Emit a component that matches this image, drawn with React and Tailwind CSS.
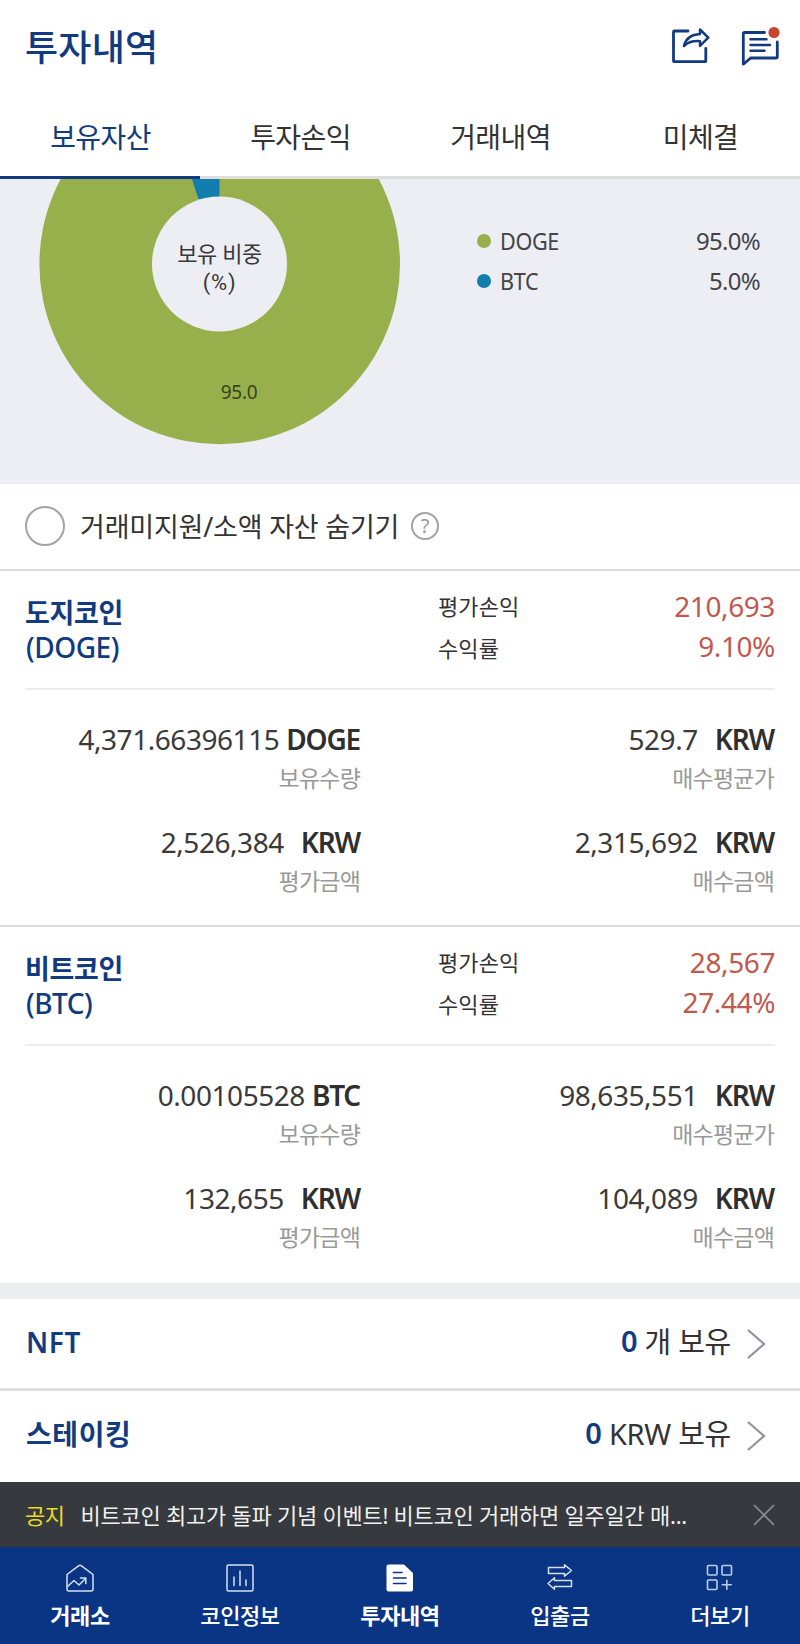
import { useState } from 'react';

const TABS = ['보유자산', '투자손익', '거래내역', '미체결'];

const LEGEND = [
  { symbol: 'DOGE', ratio: '95.0%', dot: 'bg-[#98b04c]' },
  { symbol: 'BTC', ratio: '5.0%', dot: 'bg-[#127eae]' },
];

const COINS = [
  {
    name: '도지코인',
    symbol: 'DOGE',
    profit: '210,693',
    rate: '9.10%',
    amount: '4,371.66396115',
    avgPrice: '529.7',
    evalPrice: '2,526,384',
    buyPrice: '2,315,692',
  },
  {
    name: '비트코인',
    symbol: 'BTC',
    profit: '28,567',
    rate: '27.44%',
    amount: '0.00105528',
    avgPrice: '98,635,551',
    evalPrice: '132,655',
    buyPrice: '104,089',
  },
];

/* ---------------- ICONS ---------------- */
const ShareIcon = () => (
  <svg width="40" height="40" viewBox="0 0 40 40" fill="none" stroke="#123a7e" strokeWidth="2.8" strokeLinecap="round" strokeLinejoin="round">
    <path d="M18 3H4.500Q3.500 3 3.500 4V32.500Q3.500 33.700 4.700 33.700H34.500Q35.800 33.700 35.800 32.500V20.500" />
    <path d="M14 18C15.500 11 21 6.500 30 6V1.500L38.300 9.700L30 17.800V13.200C23.500 12.700 18.500 13.500 14 18Z" strokeWidth="2.500" />
  </svg>
);

const MessageIcon = () => (
  <svg className="overflow-visible" width="40" height="40" viewBox="0 0 40 40" fill="none" stroke="#123a7e" strokeWidth="2.8" strokeLinecap="round" strokeLinejoin="round">
    <path d="M24.500 4.500H4.500Q3.300 4.500 3.300 5.700V36.200L10.700 30H36Q37.300 30 37.300 28.700V14" />
    <path d="M10.500 11.200H26.500M10.500 16.900H30M10.500 22.700H24.500" strokeWidth="2.500" />
    <circle cx="34" cy="4.500" r="5.600" fill="#c8452e" stroke="none" />
  </svg>
);

const HomeIcon = () => (
  <svg width="28" height="28" viewBox="0 0 28 28" fill="none" stroke="#d5dff0" strokeWidth="1.5" strokeLinecap="round" strokeLinejoin="round">
    <path d="M1 10.500L12.500 1.800Q14 0.900 15.500 1.800L27 10.500V25Q27 27 25 27H3Q1 27 1 25Z" />
    <path d="M1.500 22.500L8 16.500L13 21L19.500 14.500M14.500 14H19.800V19.500" />
  </svg>
);

const ChartIcon = () => (
  <svg width="28" height="28" viewBox="0 0 28 28" fill="none" stroke="#d5dff0" strokeWidth="1.5" strokeLinecap="round">
    <rect x="1" y="1" width="26" height="26" rx="1.5" />
    <path d="M8 13V21.500M14 7V21.500M20 16V21.500" />
  </svg>
);

const DocIcon = () => (
  <svg width="28" height="28" viewBox="0 0 28 28">
    <path d="M2.500 0.500H18L27 9V25.500Q27 27.500 25 27.500H2.500Q0.500 27.500 0.500 25.500V2.500Q0.500 0.500 2.500 0.500Z" fill="#fff" />
    <path d="M7.500 8.500H16M7.500 14H20M7.500 19.500H20" stroke="#0a3585" strokeWidth="1.6" strokeLinecap="round" />
  </svg>
);

const TransferIcon = () => (
  <svg width="28" height="28" viewBox="0 0 28 28" fill="none" stroke="#d5dff0" strokeWidth="1.5" strokeLinejoin="round">
    <path d="M2.500 3.500H18.500V0.800L25.500 6.500L18.500 12.200V9.500H2.500Z" />
    <path d="M25.500 16.500H8.500V13.800L2 19.500L8.500 25.200V22.500H25.500Z" />
  </svg>
);

const MoreIcon = () => (
  <svg width="28" height="28" viewBox="0 0 28 28" fill="none" stroke="#bccdec" strokeWidth="1.6" strokeLinecap="round">
    <rect x="1.5" y="1.5" width="9.5" height="9.5" rx="1" />
    <rect x="16" y="1.5" width="9.5" height="9.5" rx="1" />
    <rect x="1.5" y="16" width="9.5" height="9.5" rx="1" />
    <path d="M20.800 16.300V25.300M16.300 20.800H25.300" />
  </svg>
);

const Chevron = () => (
  <svg width="20" height="32" viewBox="0 0 20 32" fill="none" stroke="#8f939c" strokeWidth="2.2">
    <path d="M2 2L18 16L2 30" />
  </svg>
);

const NAV = [
  { label: '거래소', Icon: HomeIcon, weight: 'font-bold' },
  { label: '코인정보', Icon: ChartIcon, weight: 'font-medium' },
  { label: '투자내역', Icon: DocIcon, weight: 'font-bold' },
  { label: '입출금', Icon: TransferIcon, weight: 'font-medium' },
  { label: '더보기', Icon: MoreIcon, weight: 'font-medium' },
];

function Cell({ value, unit, label, tight }) {
  return (
    <div className="text-right">
      <div className={`flex h-10 items-center justify-end text-[28px] leading-10 ${tight ? 'gap-[7px]' : 'gap-[17px]'}`}>
        <span className="tracking-[-0.45px] text-[#3a3a3a]">{value}</span>
        <span className="font-semibold tracking-[-1.2px] text-[#2f2f2f]">{unit}</span>
      </div>
      <div className="h-[38px] text-[23px] leading-[38px] tracking-[-0.8px] text-[#999]">{label}</div>
    </div>
  );
}

function CoinItem({ coin }) {
  return (
    <section className="h-[356px] border-b-2 border-[#dcdcdc] px-[25px] last:border-white">
      <div className="flex h-[119px] border-b-2 border-[#ececec] pt-[25px]">
        <h2 className="w-[413px] text-[27px] leading-[34px] tracking-[-0.3px] text-[#123a7e]">
          <span className="block font-bold">{coin.name}</span>
          <span className="block pl-px text-[28px] font-medium tracking-[-0.5px]">({coin.symbol})</span>
        </h2>
        <div className="-mt-[11px] text-[22px] leading-[42px] tracking-[0.1px] text-[#333]">
          <p>평가손익</p>
          <p>수익률</p>
        </div>
        <div className="-mt-[10px] ml-auto text-right text-[28px] leading-10 tracking-[-0.4px] text-[#c1594e]">
          <p>{coin.profit}</p>
          <p>{coin.rate}</p>
        </div>
      </div>
      <div className="grid grid-cols-[335px_414px] gap-y-[25px] pt-[29px]">
        <Cell value={coin.amount} unit={coin.symbol} label="보유수량" tight />
        <Cell value={coin.avgPrice} unit="KRW" label="매수평균가" />
        <Cell value={coin.evalPrice} unit="KRW" label="평가금액" />
        <Cell value={coin.buyPrice} unit="KRW" label="매수금액" />
      </div>
    </section>
  );
}

function HoldingRow({ title, count, unit }) {
  return (
    <div className="flex items-center pr-[34px] pl-[26px] last:pb-[2px]">
      <span className="-mt-[3px] text-[28px] font-semibold tracking-[0.6px] text-[#123a7e]">{title}</span>
      <span className="-mt-[5px] ml-auto text-[29px] font-semibold text-[#123a7e]">{count}</span>
      <span className="-mt-[3px] mr-[15px] ml-[7px] text-[29px] tracking-[-0.3px] text-[#333]">{unit} 보유</span>
      <Chevron />
    </div>
  );
}

export default function App() {
  const [tab, setTab] = useState('보유자산');
  const [hideSmall, setHideSmall] = useState(false);
  const [notice, setNotice] = useState(true);

  return (
    <div className="flex h-[1644px] w-[800px] flex-col overflow-hidden bg-white font-['Noto_Sans','Noto_Sans_CJK_KR',sans-serif] text-[#333]">
      {/* HEADER */}
      <header className="flex h-[96px] items-center pr-[20px] pl-[25px]">
        <h1 className="text-[36px] leading-[40px] font-medium tracking-[0.2px] text-[#123a7e]">투자내역</h1>
        <button className="mr-[30px] ml-auto"><ShareIcon /></button>
        <button><MessageIcon /></button>
      </header>

      {/* TABS */}
      <nav className="grid h-[83px] grid-cols-4">
        {TABS.map(t => (
          <button
            key={t}
            onClick={() => setTab(t)}
            className={`border-b-3 pt-[2px] pl-px text-[28px] tracking-[-0.6px] ${
              tab === t ? 'border-[#123a7e] text-[#123a7e]' : 'border-[#dedede]'
            }`}
          >
            {t}
          </button>
        ))}
      </nav>

      {/* PORTFOLIO CHART */}
      <section className="flex h-[305px] shrink-0 bg-[#edeef4]">
        <svg width="440" height="305" viewBox="0 0 440 305">
          <circle cx="219.7" cy="85" r="180.3" fill="#98b04c" />
          <path d="M219.500 85V-95A180 180 0 0 0 163.900 -86.200Z" fill="#127eae" />
          <circle cx="219.5" cy="85" r="67.5" fill="#edeef4" />
          <text x="219.5" y="83" textAnchor="middle" fontSize="22" letterSpacing="-0.4" fill="#38383c">보유 비중</text>
          <text x="219.5" y="111" textAnchor="middle" fontFamily="Roboto, sans-serif" fontSize="22" letterSpacing="0.8" fill="#38383c">(%)</text>
          <text x="239" y="220" textAnchor="middle" fontSize="19" letterSpacing="-0.3" fill="#3b431f">95.0</text>
        </svg>
        <ul className="w-[320px] pt-[42px] pl-[37px]">
          {LEGEND.map(item => (
            <li key={item.symbol} className="flex h-10 items-center text-[24px] text-[#444448]">
              <span className={`-mt-px mr-[9px] size-[14px] rounded-full ${item.dot}`} />
              <span className="origin-left scale-x-[0.9] tracking-[-0.4px]">{item.symbol}</span>
              <span className="ml-auto tracking-[-0.7px]">{item.ratio}</span>
            </li>
          ))}
        </ul>
      </section>

      {/* FILTER */}
      <div className="flex h-[87px] shrink-0 items-center border-b-2 border-[#dcdcdc] pl-[25px]">
        <button
          onClick={() => setHideSmall(!hideSmall)}
          className={`-mt-px size-10 rounded-full border-2 border-[#a3a3a3] ${hideSmall ? 'bg-[#123a7e]' : 'bg-white'}`}
        />
        <span className="ml-[15px] pt-px text-[27px] tracking-[-0.2px]">거래미지원/소액 자산 숨기기</span>
        <span className="-mt-px ml-3 flex size-7 items-center justify-center rounded-full border-2 border-[#a3a3a3] text-[20px] leading-none text-[#999]">
          ?
        </span>
      </div>

      {/* COINS */}
      <div>
        {COINS.map(coin => (
          <CoinItem key={coin.symbol} coin={coin} />
        ))}
      </div>

      {/* OTHER HOLDINGS */}
      <div className="grid h-[199px] shrink-0 grid-rows-[89px_91px] gap-y-[3px] border-t-16 border-[#ebedf1] bg-[#dedede] *:bg-white">
        <HoldingRow title="NFT" count="0" unit="개" />
        <HoldingRow title="스테이킹" count="0" unit="KRW" />
      </div>

      {/* NOTICE */}
      {notice && (
        <div className="flex h-[65px] shrink-0 items-center bg-[#36393d] px-[25px] pt-px text-[22px] text-[#f0f0f0]">
          <span className="mr-4 tracking-[-0.5px] text-[#eadb25]">공지</span>
          <span className="tracking-[-0.24px]">비트코인 최고가 돌파 기념 이벤트! 비트코인 거래하면 일주일간 매...</span>
          <button className="ml-auto" onClick={() => setNotice(false)}>
            <svg width="22" height="22" viewBox="0 0 22 22" stroke="#8b8d90" strokeWidth="1.7">
              <path d="M1 1L21 21M21 1L1 21" />
            </svg>
          </button>
        </div>
      )}

      {/* BOTTOM NAV */}
      <nav className="grid h-[97px] shrink-0 grid-cols-5 bg-[#0a3585] text-white">
        {NAV.map(({ label, Icon, weight }) => (
          <button key={label} className="flex flex-col items-center pt-[17px]">
            <Icon />
            <span className={`mt-[7px] text-[22px] leading-[32px] tracking-[-0.4px] ${weight}`}>{label}</span>
          </button>
        ))}
      </nav>
    </div>
  );
}
